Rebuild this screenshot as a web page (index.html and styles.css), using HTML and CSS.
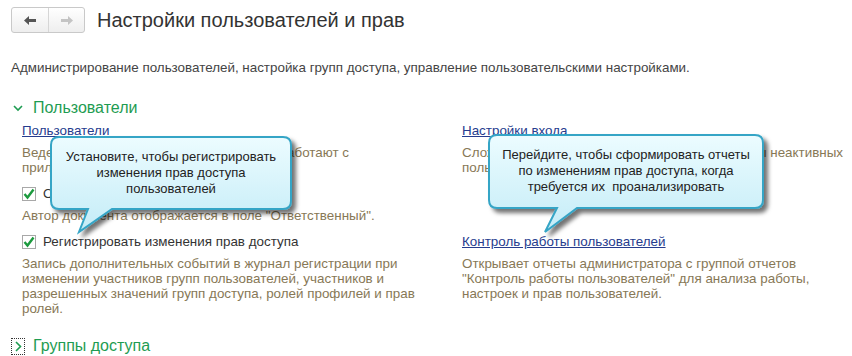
FILE: index.html
```html
<!DOCTYPE html>
<html lang="ru">
<head>
  <meta charset="UTF-8">
  <title>Настройки пользователей и прав</title>
  <link rel="stylesheet" href="styles.css">
</head>
<body>
  <div class="page">
    <header class="toolbar">
      <div class="nav">
        <button class="nav-btn">
          <svg width="12" height="9" viewBox="0 0 12 9"><path d="M0 4.5 L5 0 V3 H12 V6 H5 V9 Z" fill="#555"/></svg>
        </button>
        <button class="nav-btn">
          <svg width="12" height="9" viewBox="0 0 12 9"><path d="M12 4.5 L7 0 V3 H0 V6 H7 V9 Z" fill="#c4c4c4"/></svg>
        </button>
      </div>
      <h1>Настройки пользователей и прав</h1>
    </header>

    <p class="intro">Администрирование пользователей, настройка групп доступа, управление пользовательскими настройками.</p>

    <section class="group">
      <h2 class="group-title">
        <span class="toggle"><svg width="10" height="7" viewBox="0 0 10 7"><path d="M1 1 L5 5 L9 1" fill="none" stroke="#1e9c52" stroke-width="1.6"/></svg></span>
        Пользователи
      </h2>
      <div class="cols">
        <div class="item">
          <a href="#" class="head">Пользователи</a>
          <p class="note">Ведение списка пользователей, которые работают с приложением.</p>
        </div>
        <div class="item">
          <a href="#" class="head">Настройки входа</a>
          <p class="note">Сложность паролей, запрет входа, сроки работы неактивных пользователей.</p>
        </div>
        <div class="item">
          <label class="head check"><span class="box"><svg width="12" height="12" viewBox="0 0 12 12"><path d="M1.5 6 L4.5 9.5 L10.5 1.5" fill="none" stroke="#1c9a3e" stroke-width="2.4"/></svg></span>Ответственный - автор документа</label>
          <p class="note">Автор документа отображается в поле "Ответственный".</p>
        </div>
        <div class="item"></div>
        <div class="item">
          <label class="head check"><span class="box"><svg width="12" height="12" viewBox="0 0 12 12"><path d="M1.5 6 L4.5 9.5 L10.5 1.5" fill="none" stroke="#1c9a3e" stroke-width="2.4"/></svg></span>Регистрировать изменения прав доступа</label>
          <p class="note">Запись дополнительных событий в журнал регистрации при изменении участников групп пользователей, участников и разрешенных значений групп доступа, ролей профилей и прав ролей.</p>
        </div>
        <div class="item">
          <a href="#" class="head">Контроль работы пользователей</a>
          <p class="note">Открывает отчеты администратора с группой отчетов "Контроль работы пользователей" для анализа работы, настроек и прав пользователей.</p>
        </div>
      </div>
    </section>

    <section class="group collapsed">
      <h2 class="group-title">
        <span class="toggle focused"><svg width="7" height="11" viewBox="0 0 7 11"><path d="M1 1 L5.5 5.5 L1 10" fill="none" stroke="#1e9c52" stroke-width="1.6"/></svg></span>
        Группы доступа
      </h2>
    </section>

    <div class="callout callout-left">
      <svg class="bubble" width="256" height="106" viewBox="0 0 256 106">
        <defs>
          <linearGradient id="fillA" x1="0" y1="0" x2="0" y2="1">
            <stop offset="0" stop-color="#ecfcff"/>
            <stop offset="1" stop-color="#c4ecf7"/>
          </linearGradient>
          <filter id="shadowA" x="-10%" y="-10%" width="130%" height="140%">
            <feDropShadow dx="4" dy="4" stdDeviation="2.2" flood-color="#000" flood-opacity="0.55"/>
          </filter>
        </defs>
        <path d="M11 3 H235 Q243 3 243 11 V67 Q243 75 235 75 H64 L31 98 L40 75 H11 Q3 75 3 67 V11 Q3 3 11 3 Z" fill="url(#fillA)" stroke="#36a5c6" stroke-width="2" filter="url(#shadowA)"/>
      </svg>
      <div class="callout-text" style="width: 240px">Установите, чтобы регистрировать<br>изменения прав доступа<br>пользователей</div>
    </div>

    <div class="callout callout-right">
      <svg class="bubble" width="290" height="108" viewBox="0 0 290 108">
        <defs>
          <linearGradient id="fillB" x1="0" y1="0" x2="0" y2="1">
            <stop offset="0" stop-color="#ecfcff"/>
            <stop offset="1" stop-color="#c4ecf7"/>
          </linearGradient>
          <filter id="shadowB" x="-10%" y="-10%" width="130%" height="140%">
            <feDropShadow dx="4" dy="4" stdDeviation="2.2" flood-color="#000" flood-opacity="0.55"/>
          </filter>
        </defs>
        <path d="M11 3 H269 Q277 3 277 11 V68 Q277 76 269 76 H91 L59 100 L71 76 H11 Q3 76 3 68 V11 Q3 3 11 3 Z" fill="url(#fillB)" stroke="#36a5c6" stroke-width="2" filter="url(#shadowB)"/>
      </svg>
      <div class="callout-text" style="width: 274px">Перейдите, чтобы сформировать отчеты<br>по изменениям прав доступа, когда<br>требуется их&nbsp; проанализировать</div>
    </div>
  </div>
</body>
</html>
```

FILE: styles.css
```css
body {
  margin: 0;
  background: #fff;
  font-family: "Liberation Sans", Arial, sans-serif;
  font-size: 13.4px;
  line-height: 15px;
  color: #333;
}
.page {
  position: relative;
  width: 852px;
  height: 356px;
  overflow: hidden;
}
.toolbar {
  display: flex;
  align-items: center;
  gap: 12px;
  padding: 7px 11px 0;
}
.nav {
  display: flex;
  height: 26px;
  border: 1px solid #c9c9c9;
  border-radius: 3px;
  box-sizing: border-box;
  background: linear-gradient(#ffffff, #eeeeee);
}
.nav-btn {
  width: 36px;
  height: 24px;
  padding: 0;
  border: none;
  background: transparent;
  display: flex;
  align-items: center;
  justify-content: center;
}
.nav-btn + .nav-btn {
  border-left: 1px solid #d6d6d6;
}
h1 {
  margin: 0;
  font-size: 20px;
  line-height: 23px;
  font-weight: normal;
  color: #333;
}
.intro {
  margin: 27px 11px 0;
  color: #444;
}
.group-title {
  display: flex;
  align-items: center;
  gap: 10px;
  margin: 24px 0 0 13px;
  font-size: 16px;
  line-height: 18px;
  font-weight: normal;
  color: #1e9c52;
}
.toggle {
  display: flex;
  width: 10px;
  justify-content: center;
}
.cols {
  display: grid;
  grid-template-columns: 400px 1fr;
  column-gap: 40px;
  row-gap: 11px;
  margin: 6px 0 0 22px;
}
.head {
  display: block;
  line-height: 16px;
}
a.head {
  color: #263c8e;
  text-decoration: underline;
  text-underline-offset: 1px;
  width: max-content;
}
.check {
  display: flex;
  align-items: center;
  gap: 7px;
  color: #333;
}
.box {
  width: 12px;
  height: 12px;
  border: 1px solid #a8a8a8;
  background: #fff;
  display: flex;
}
.note {
  margin: 6px 0 0;
  color: #877856;
}
.collapsed .group-title {
  margin-top: 21px;
  margin-left: 11px;
  gap: 8px;
}
.toggle.focused {
  width: 12px;
  height: 15px;
  border: 1px dotted #333;
  align-items: center;
}
.callout {
  position: absolute;
}
.callout-left {
  left: 48px;
  top: 134px;
}
.callout-right {
  left: 486px;
  top: 132px;
}
.bubble {
  display: block;
  overflow: visible;
}
.callout-text {
  position: absolute;
  left: 3px;
  top: 15px;
  text-align: center;
  font-size: 13px;
  line-height: 16px;
  color: #222;
}
```
